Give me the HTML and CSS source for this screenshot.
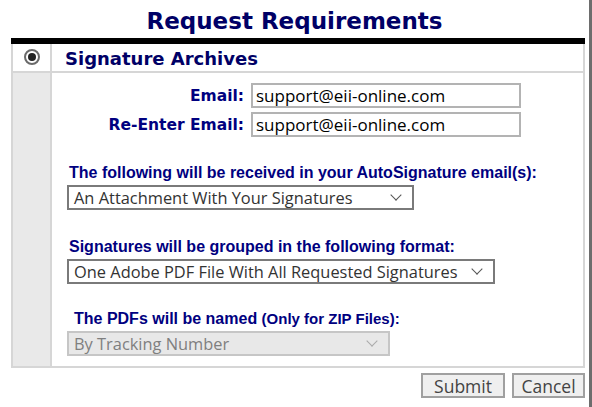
FILE: index.html
```html
<!DOCTYPE html>
<html lang="en">

<head>
    <meta charset="UTF-8">
    <meta name="viewport" content="width=device-width, initial-scale=1.0">
    <title>Request Requirements</title>
    <link rel="stylesheet" href="styles.css">
</head>

<body>
    <div class="frame">
        <h1 class="title">Request Requirements</h1>
        <table class="req">
            <tr class="head">
                <td class="pick"><span class="radio"></span></td>
                <td class="name">Signature Archives</td>
            </tr>
            <tr>
                <td class="gutter"></td>
                <td class="fields">
                    <div class="emails">
                        <label class="label">Email:</label>
                        <input class="text" type="text" value="support@eii-online.com">
                        <label class="label">Re-Enter Email:</label>
                        <input class="text" type="text" value="support@eii-online.com">
                    </div>

                    <div class="question first">The following will be received in your AutoSignature email(s):</div>
                    <div class="select w-attach">An Attachment With Your Signatures <span class="chev"></span></div>

                    <div class="question">Signatures will be grouped in the following format:</div>
                    <div class="select w-format">One Adobe PDF File With All Requested Signatures <span class="chev"></span></div>

                    <div class="question indent">The PDFs will be named <small>(Only for ZIP Files):</small></div>
                    <div class="select w-named disabled">By Tracking Number <span class="chev"></span></div>
                </td>
            </tr>
        </table>
        <div class="actions">
            <button class="btn submit">Submit</button>
            <button class="btn cancel">Cancel</button>
        </div>
    </div>
</body>

</html>
```

FILE: styles.css
```css
body {
    margin: 0;
    background-color: #fff;
}

.frame {
    width: 589px;
    height: 407px;
    border-right: 3px solid #6d6d6d;
}

.title {
    margin: 0;
    padding-top: 8px;
    height: 30px;
    text-align: center;
    font-family: "DejaVu Sans", Verdana, sans-serif;
    font-size: 23px;
    line-height: 27px;
    font-weight: bold;
    color: #000066;
}

.req {
    margin-left: 11px;
    width: 574px;
    border-collapse: collapse;
    border-top: 6px solid #000;
}

.req td {
    border: 2px solid #d6d6d6;
    padding: 0;
    vertical-align: top;
}

.req tr.head td {
    border-top: none;
    height: 25px;
    padding-top: 2px;
    line-height: 25px;
    vertical-align: top;
}

.pick {
    width: 37px;
    text-align: center;
}

.radio {
    display: inline-block;
    width: 12px;
    height: 12px;
    border: 2px solid #6a6a6a;
    border-radius: 50%;
    position: relative;
    top: 1px;
}

.radio::after {
    content: "";
    position: absolute;
    left: 2px;
    top: 2px;
    width: 8px;
    height: 8px;
    border-radius: 50%;
    background-color: #222;
}

.name {
    padding-left: 13px !important;
    font-family: "DejaVu Sans", Verdana, sans-serif;
    font-size: 18px;
    font-weight: bold;
    color: #000066;
}

.gutter {
    background-color: #e9e9e9;
}

.fields {
    padding: 10px 0 10px 15px !important;
}

.emails {
    display: grid;
    grid-template-columns: 177px 270px;
    column-gap: 7px;
    row-gap: 4px;
    align-items: center;
}

.label {
    text-align: right;
    font-family: "DejaVu Sans", Verdana, sans-serif;
    font-size: 15.5px;
    font-weight: bold;
    color: #000080;
}

.text {
    box-sizing: border-box;
    height: 25px;
    margin: 0;
    padding: 0 3px;
    border: 2px solid #b3b3b3;
    font-family: "Open Sans", sans-serif;
    font-size: 17px;
    color: #000;
}

.question {
    margin: 28px 0 3px 2px;
    font-family: "Liberation Sans", Arial, sans-serif;
    font-size: 16px;
    font-weight: bold;
    color: #000080;
}

.question.first {
    margin-top: 27px;
}

.question.indent {
    margin-left: 7px;
    margin-top: 26px;
}

.question small {
    font-size: 15px;
}

.select {
    box-sizing: border-box;
    display: flex;
    align-items: center;
    justify-content: space-between;
    height: 25px;
    padding: 0 12px 0 5px;
    border: 2px solid #7a7a7a;
    font-family: "Open Sans", sans-serif;
    font-size: 16.4px;
    color: #333;
}

.w-attach {
    width: 347px;
}

.w-format {
    width: 428px;
}

.w-named {
    width: 323px;
}

.select.disabled {
    border-color: #c6c6c6;
    background-color: #e8e8e8;
    color: #7f7f7f;
}

.chev {
    width: 7px;
    height: 7px;
    border-right: 1px solid #555;
    border-bottom: 1px solid #555;
    transform: rotate(45deg);
    margin-top: -5px;
}

.disabled .chev {
    border-color: #aaa;
}

.actions {
    display: flex;
    justify-content: flex-end;
    gap: 7px;
    width: 585px;
    margin-top: 5px;
}

.btn {
    height: 25px;
    padding: 0;
    border: 2px solid #a0a0a0;
    background-color: #efefef;
    font-family: "Open Sans", sans-serif;
    font-size: 17.5px;
    line-height: 20px;
    color: #444;
}

.submit {
    width: 84px;
}

.cancel {
    width: 73px;
}
```
